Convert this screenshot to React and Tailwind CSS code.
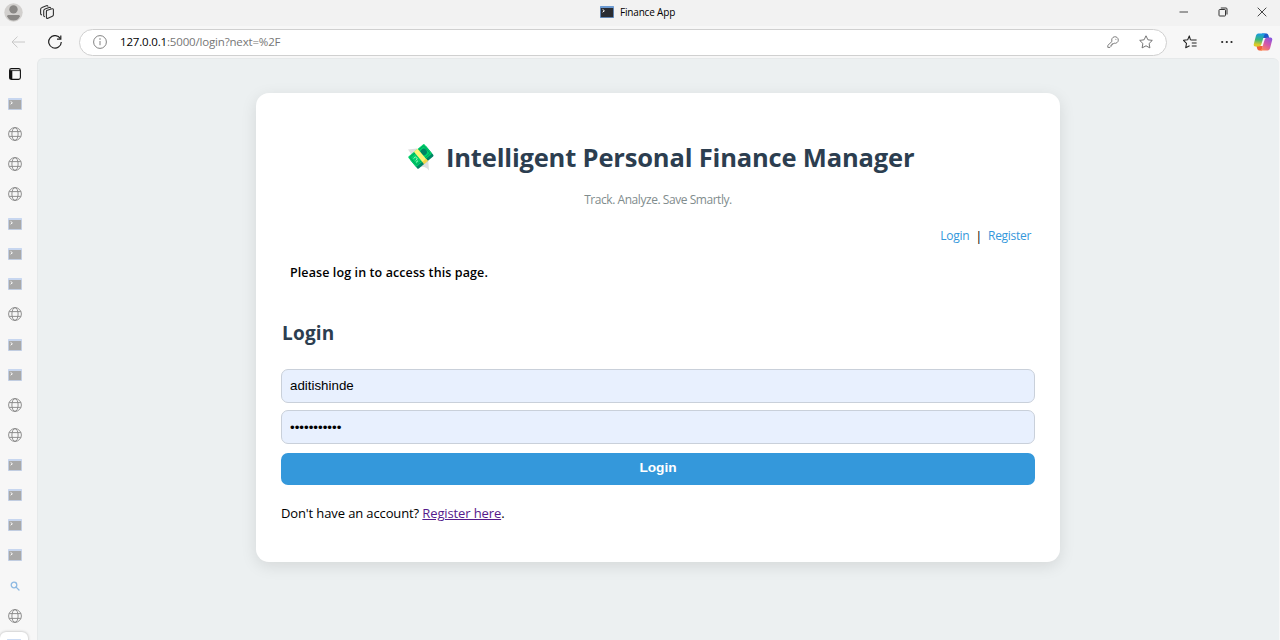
const FAVICONS = [
  'term', 'globe', 'globe', 'globe', 'term', 'term', 'term', 'globe', 'term',
  'term', 'globe', 'globe', 'term', 'term', 'term', 'term', 'search', 'globe',
];

function Terminal({ faded }) {
  return (
    <svg width="14" height="12" viewBox="0 0 14 12" className={faded ? 'opacity-45' : ''}>
      <rect width="14" height="12" rx="0.5" fill={faded ? '#8fb0e6' : '#6d9bd3'} />
      <rect x="0.8" y="2" width="12.4" height="9.2" fill={faded ? '#4c4c4c' : '#292c32'} />
      <path d="M2.6 3.4 4.4 4.8 2.6 6.2" fill="none" stroke="#fff" strokeWidth="1" />
    </svg>
  );
}

function Globe() {
  return (
    <svg width="14" height="14" viewBox="0 0 14 14" fill="none" stroke="#858585" strokeWidth="0.9">
      <circle cx="7" cy="7" r="6.4" />
      <ellipse cx="7" cy="7" rx="3.1" ry="6.4" />
      <path d="M1.2 4.6H12.8M1.2 9.4H12.8" />
    </svg>
  );
}

function SearchIcon() {
  return (
    <svg width="10" height="10" viewBox="0 0 10 10" fill="none" stroke="#8db9e2" strokeWidth="1.3">
      <circle cx="4" cy="4" r="2.8" />
      <path d="M6.1 6.1 9 9" strokeLinecap="round" />
    </svg>
  );
}

function Favicon({ kind }) {
  if (kind === 'term') return <Terminal faded />;
  if (kind === 'globe') return <Globe />;
  return <SearchIcon />;
}

function TitleBar() {
  return (
    <header className="flex h-[26px] shrink-0 items-center bg-[#f2f2f2] pb-[2px]">
      <div className="flex w-[600px] items-center pl-1">
        <svg width="19" height="19" viewBox="0 0 19 19">
          <circle cx="9.5" cy="9.5" r="9.2" fill="#d2d0ce" />
          <circle cx="9.5" cy="6.4" r="4.2" fill="#8a8886" />
          <path d="M3.2 13.2Q3.2 12 4.4 12H14.6Q15.8 12 15.8 13.2C15 16 12.6 17.5 9.5 17.5S4 16 3.2 13.2Z" fill="#8a8886" />
        </svg>
        <svg className="ml-[17px]" width="14" height="14" viewBox="0 0 14 14" fill="none" stroke="#303030" strokeWidth="1.1" strokeLinejoin="round">
          <path d="M6.6 5.6 12 3.8Q13.4 3.4 13.4 4.8V9.8Q13.4 10.8 12.4 11.2L8 13.2Q6.4 13.8 6.4 12.2V6.4Q6.4 5.8 7 5.5Z" />
          <path d="M10.7 3.4Q10.5 2.1 9.2 2.5L5 4Q3.7 4.5 3.7 5.8V10.4Q3.7 11.6 4.9 11.6" />
          <path d="M8.1 1.7Q7.7 .3 6.4.8L2 2.5Q.6 3 .6 4.4V8.6Q.6 9.9 2 10" />
        </svg>
      </div>
      <Terminal />
      <span className="ml-[6px] whitespace-nowrap font-['Open_Sans','Noto_Sans',sans-serif] text-[10px] leading-[14px] tracking-[-0.18px] text-black">
        Finance App
      </span>
      <div className="ml-auto flex items-center gap-[29px] pr-[13px]">
        <svg width="10" height="10" viewBox="0 0 10 10" stroke="#333" strokeWidth="0.9"><path d="M.5 5H9" /></svg>
        <svg width="10" height="10" viewBox="0 0 10 10" fill="none" stroke="#333" strokeWidth="1">
          <rect x="1" y="2.5" width="6.5" height="6.5" rx="0.7" />
          <path d="M2.8 1H8Q9 1 9 2V7.5" />
        </svg>
        <svg width="10" height="10" viewBox="0 0 10 10" stroke="#333" strokeWidth="0.9"><path d="M.7.7 9.3 9.3M9.3.7.7 9.3" /></svg>
      </div>
    </header>
  );
}

const STAR = 'M7 .8 8.9 4.8 13.3 5.4 10.1 8.5 10.9 12.9 7 10.8 3.1 12.9 3.9 8.5 .7 5.4 5.1 4.8Z';

function Toolbar() {
  return (
    <div className="flex h-[32px] shrink-0 items-center bg-[#f7f7f7]">
      <svg className="ml-[11px]" width="14" height="12" viewBox="0 0 14 12" fill="none" stroke="#c8c8c8" strokeWidth="1">
        <path d="M6.5.6 1 6 6.5 11.4M1 6H14" />
      </svg>
      <svg className="ml-[23px]" width="14" height="14" viewBox="0 0 14 14" fill="none" stroke="#222" strokeWidth="1.2">
        <path d="M12.4 3.6A6.3 6.3 0 1 0 13.3 7" />
        <path d="M12.8.5V4.2H9" />
      </svg>
      <div className="ml-[17px] flex h-[27px] w-[1088px] items-center rounded-full border border-[#d0d0d0] bg-white pl-[13px] pr-[13px]">
        <svg width="14" height="14" viewBox="0 0 14 14" fill="none" stroke="#757575" strokeWidth="0.9">
          <circle cx="7" cy="7" r="6.4" />
          <path d="M7 6V10.2" /><circle cx="7" cy="4" r="0.3" fill="#757575" />
        </svg>
        <span className="ml-[13px] whitespace-nowrap font-['Open_Sans','Noto_Sans',sans-serif] text-[11.5px] leading-[16px] tracking-[-0.17px] text-[#767676]">
          <span className="text-black">127.0.0.1</span>:5000/login?next=%2F
        </span>
        <svg className="ml-auto" width="12" height="12" viewBox="0 0 12 12" fill="none" stroke="#707070" strokeWidth="0.9" strokeLinejoin="round">
          <path d="M5 5.4A3.3 3.3 0 1 1 7.1 7.2L6.2 7.8H5.2V9H4V10.4L3 11.4H.8V9.4Z" />
          <circle cx="8.9" cy="3.2" r="0.5" fill="#707070" stroke="none" />
        </svg>
        <svg className="ml-[20px]" width="14" height="14" viewBox="0 0 14 14" fill="none" stroke="#666" strokeWidth="0.9" strokeLinejoin="round"><path d={STAR} /></svg>
      </div>
      <svg className="ml-[16px]" width="14" height="14" viewBox="0 0 14 14" fill="none" stroke="#222" strokeWidth="1.05" strokeLinejoin="round">
        <path d="M7.5 5 6.3.9 4.7 4.8.5 5.3 3.5 8.4 2.7 12.8 6.6 10.8" />
        <path d="M7.6 4.9H13.6M8.8 8H13.6M8.8 11H13.6" />
      </svg>
      <svg className="ml-[24px]" width="12" height="4" viewBox="0 0 12 4" fill="#222">
        <circle cx="1.2" cy="2" r="1.1" /><circle cx="5.8" cy="2" r="1.1" /><circle cx="10.5" cy="2" r="1.1" />
      </svg>
      <svg className="ml-[20px]" width="20" height="18" viewBox="0 0 20 18">
        <defs>
          <linearGradient id="left" x1="0.3" y1="0" x2="0.2" y2="1">
            <stop offset="0" stopColor="#199be2" /><stop offset="0.45" stopColor="#38b67c" /><stop offset="0.85" stopColor="#dccb28" />
          </linearGradient>
          <linearGradient id="right" x1="0.8" y1="0" x2="0.2" y2="1">
            <stop offset="0" stopColor="#8857df" /><stop offset="0.5" stopColor="#d557a9" /><stop offset="1" stopColor="#ff8a55" />
          </linearGradient>
        </defs>
        <path d="M9 .6H13.6Q15 .6 15.5 2.4L16.2 5H10Z" fill="#1d58c8" />
        <path d="M6 17.4H9L9.8 13H3.5L4.3 16Q4.8 17.4 6 17.4Z" fill="#f1603a" />
        <path d="M5.3.6H13Q11.6.9 11 2.7L8.3 11.5Q7.6 13.4 5.8 13.4H2.4Q.3 13.4 .8 11L3 2.5Q3.7.6 5.3.6Z" fill="url(#left)" />
        <path d="M14.7 17.4H7Q8.4 17.1 9 15.3L11.7 6.5Q12.4 4.6 14.2 4.6H17.6Q19.7 4.6 19.2 7L17 15.5Q16.3 17.4 14.7 17.4Z" fill="url(#right)" />
      </svg>
    </div>
  );
}

function Sidebar() {
  return (
    <aside className="flex w-[37px] shrink-0 flex-col overflow-hidden bg-[#f7f7f7]">
      <div className="flex h-[30px] w-[30px] shrink-0 items-center justify-center pt-[2px]">
        <svg width="12" height="12" viewBox="0 0 12 12">
          <rect x="0.6" y="0.6" width="10.8" height="10.8" rx="1.8" fill="none" stroke="#111" strokeWidth="1.1" />
          <path d="M1 2.6H11.2" stroke="#111" strokeWidth="0.8" />
          <rect x="0.6" y="2.6" width="2.7" height="8.6" fill="#111" />
        </svg>
      </div>
      {FAVICONS.map((kind, i) => (
        <div key={i} className="flex h-[30.13px] w-[30px] shrink-0 items-center justify-center pt-[1px]">
          <Favicon kind={kind} />
        </div>
      ))}
      <div className="mt-[2px] flex h-[30px] w-[28px] shrink-0 justify-center rounded-md bg-white pt-[7px] shadow-[0_0_3px_rgba(0,0,0,0.3)]">
        <Terminal faded />
      </div>
    </aside>
  );
}

function FlyingMoney() {
  return (
    <svg width="28" height="28" viewBox="0 0 28 28">
      <path d="M1 6.4 10 5.4 12 13 5 13.8Q4 10 1 6.4Z" fill="#dededf" />
      <path d="M14 20 21 14.5 22 27.5Q18.5 23 14 24Z" fill="#dededf" />
      <g transform="rotate(-40 14 13.5)">
        <rect x="3.5" y="8.2" width="21" height="13" rx="1.2" fill="#008463" />
        <rect x="3.5" y="5.5" width="21" height="13" rx="1.2" fill="#00d26a" />
        <rect x="5" y="7" width="18" height="10" rx="0.8" fill="none" stroke="#009e60" strokeWidth="0.9" />
        <circle cx="19" cy="11.8" r="3.2" fill="#008463" />
        <path d="M7 10.2H9.6V13H7.4M6.4 14.8H9" fill="none" stroke="#b9f5ce" strokeWidth="0.8" />
        <rect x="11.6" y="5.3" width="4.8" height="16" fill="#fff478" />
        <rect x="11.6" y="18.5" width="4.8" height="2.7" fill="#f3d34a" />
      </g>
    </svg>
  );
}

function LoginCard() {
  return (
    <main className="flex h-[469px] w-[804px] flex-col rounded-[13px] bg-white px-[25px] font-['Open_Sans','Noto_Sans',sans-serif] text-black shadow-[0_4px_16px_rgba(0,0,0,0.1)]">
      <h1 className="mt-[45px] flex h-[38px] items-center whitespace-nowrap pl-[126px] text-[25.5px] font-bold leading-[38px] tracking-[-0.17px] text-[#2c3e50]">
        <FlyingMoney />
        <span className="ml-[11px]">Intelligent Personal Finance Manager</span>
      </h1>
      <p className="mt-[14px] text-center text-[12px] leading-[20px] tracking-[-0.45px] text-[#7f8c8d]">Track. Analyze. Save Smartly.</p>
      <nav className="mt-[16px] flex h-[20px] items-center justify-end whitespace-nowrap pr-[4px] text-[12px] leading-[20px] tracking-[-0.3px]">
        <a className="text-[#3498db]">Login</a>
        <span className="mx-[6px] text-[13px]">|</span>
        <a className="text-[#3498db]">Register</a>
      </nav>
      <p className="mt-[17px] pl-[9px] text-[12.5px] font-semibold leading-[20px] tracking-[0.1px]">Please log in to access this page.</p>
      <h2 className="mt-[36px] pl-px text-[19px] font-bold leading-[28px] tracking-[0.2px] text-[#2c3e50]">Login</h2>
      <form className="mt-[22px] flex flex-col" onSubmit={(e) => e.preventDefault()}>
        <input
          readOnly
          value="aditishinde"
          className="h-[34px] rounded-[7px] border border-[#c9d0da] bg-[#e8f0fe] px-[8px] pb-[2px] font-['Liberation_Sans',Arial,sans-serif] text-[13.33px] outline-none"
        />
        <input
          readOnly
          type="password"
          value="aditi123456"
          className="mt-[7px] h-[34px] rounded-[7px] border border-[#c9d0da] bg-[#e8f0fe] px-[8px] font-['Liberation_Sans',Arial,sans-serif] text-[13.33px] outline-none"
        />
        <button className="mt-[9px] h-[32px] rounded-[7px] bg-[#3498db] pb-[1px] font-['Liberation_Sans',Arial,sans-serif] text-[13.7px] font-bold text-white">
          Login
        </button>
      </form>
      <p className="mt-[18px] whitespace-nowrap text-[13px] leading-[20px] tracking-[-0.12px]">
        Don't have an account? <a className="text-[#551a8b] underline">Register here</a>.
      </p>
    </main>
  );
}

export default function App() {
  return (
    <div className="flex h-[640px] w-[1280px] flex-col overflow-hidden bg-[#f7f7f7]">
      <TitleBar />
      <Toolbar />
      <div className="flex min-h-0 flex-1">
        <Sidebar />
        <section className="mr-[1px] flex flex-1 items-start rounded-t-[6px] border-l border-t border-[#e6e9ea] bg-[#ecf0f1] pl-[218px] pt-[34px]">
          <LoginCard />
        </section>
      </div>
    </div>
  );
}
